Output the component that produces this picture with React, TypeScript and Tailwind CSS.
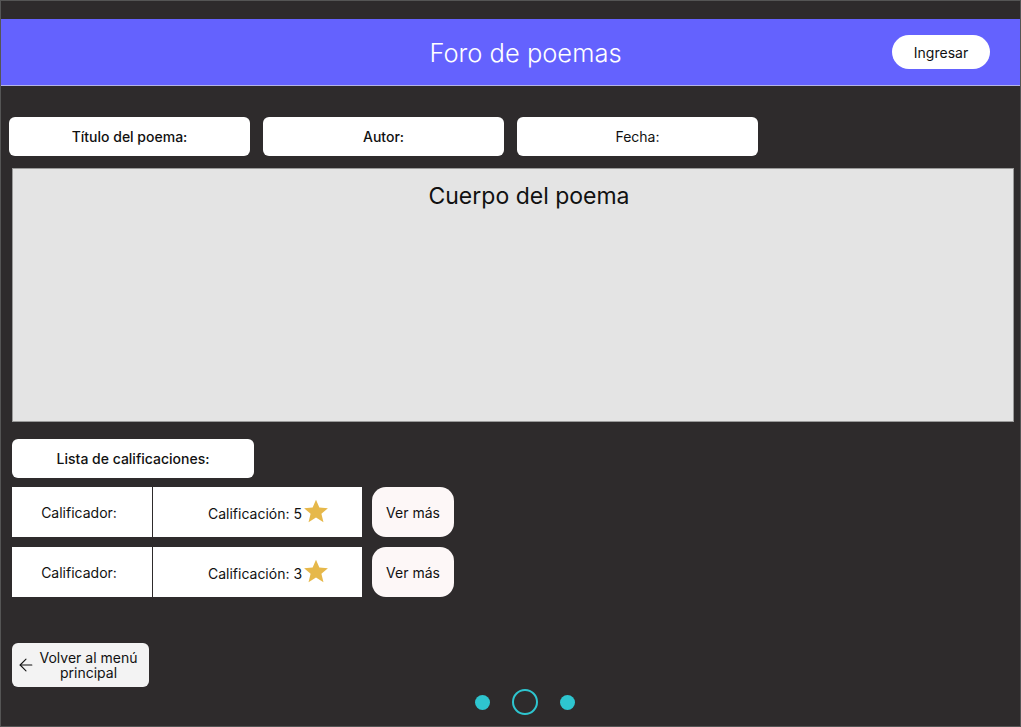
import { ArrowLeft } from "lucide-react";

const font = { fontFamily: "Inter, 'Noto Sans', sans-serif" };

const Star = () => (
  <svg width="26" height="26" viewBox="0 0 24 24" className="ml-[1px] -mt-[2px]">
    <path d="M12 1.5l3.1 7.3 7.9.6-6 5.2 1.9 7.7L12 18.1l-6.9 4.2 1.9-7.7-6-5.2 7.9-.6z" fill="#e6b84a" />
  </svg>
);

const Fila = ({ nota }: { nota: number }) => (
  <div className="flex items-stretch gap-[10px]">
    <div className="flex h-[50px] w-[350px] bg-white">
      <div className="flex w-[141px] items-center justify-center border-r border-[#2e2b2c] pr-[6px] text-[14px] text-[#111]">
        Calificador:
      </div>
      <div className="flex flex-1 items-center justify-center pl-[22px] text-[14px] text-[#111]">
        <span className="mt-[2px]">Calificación: {nota}</span>
        <Star />
      </div>
    </div>
    <button className="h-[50px] w-[82px] rounded-[14px] bg-[#fdf7f7] text-[14px] text-[#111]">Ver más</button>
  </div>
);

export default function App() {
  return (
    <div style={font} className="flex h-[727px] w-full flex-col border border-[#555] bg-[#2e2b2c]">
      <div className="h-[18px]" />
      <header className="relative flex h-[67px] items-center justify-center border-b border-[#b4b4e6] bg-[#6462fe] pl-[30px] pt-[3px]">
        <h1 className="text-[25.5px] font-light text-white">Foro de poemas</h1>
        <button className="absolute right-[30px] top-[16px] h-[34px] w-[98px] rounded-full bg-white text-[14px] text-[#111]">
          Ingresar
        </button>
      </header>

      <div className="mt-[31px] flex gap-[13px] pl-[8px]">
        {["Título del poema:", "Autor:", "Fecha:"].map((t, i) => (
          <div
            key={t}
            className={`flex h-[39px] w-[241px] items-center justify-center rounded-[6px] bg-white text-[14px] text-[#111] ${i < 2 ? "font-[450]" : ""}`}
          >
            {t}
          </div>
        ))}
      </div>

      <div className="ml-[11px] mt-[12px] flex h-[254px] w-[1002px] justify-center border border-[#9a9a9a] bg-[#e4e4e4] pl-[32px] pt-[10px]">
        <span className="text-[23px] text-[#111]">Cuerpo del poema</span>
      </div>

      <div className="ml-[11px] mt-[17px] flex h-[39px] w-[242px] items-center justify-center rounded-[6px] bg-white text-[14px] font-[450] text-[#111]">
        Lista de calificaciones:
      </div>

      <div className="ml-[11px] mt-[9px] flex flex-col gap-[10px]">
        <Fila nota={5} />
        <Fila nota={3} />
      </div>

      <div className="relative mt-[46px] flex-1">
        <button className="ml-[11px] flex h-[44px] w-[137px] items-center rounded-[6px] bg-[#f3f3f3] pl-[4px] text-[14px] leading-[15px] text-[#111]">
          <ArrowLeft size={20} strokeWidth={1.3} />
          <span className="flex-1 pr-[8px] text-center">
            Volver al menú
            <br />
            principal
          </span>
        </button>
        <div className="mt-[2px] flex items-center justify-center gap-[22px] pl-[28px]">
          <span className="h-[15px] w-[15px] rounded-full bg-[#2ec5cf]" />
          <span className="h-[26px] w-[26px] rounded-full border-2 border-[#2ec5cf]" />
          <span className="h-[15px] w-[15px] rounded-full bg-[#2ec5cf]" />
        </div>
      </div>
    </div>
  );
}
